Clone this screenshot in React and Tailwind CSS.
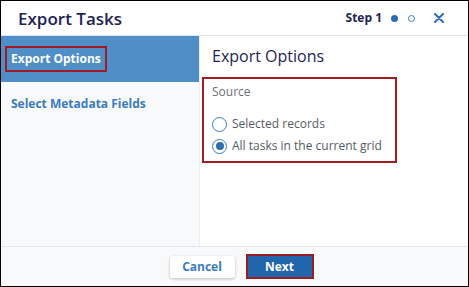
import React, { useState } from "react";

const font = { fontFamily: '"Open Sans", "Noto Sans", sans-serif' };

const Radio = ({ checked, label, onClick }) => (
  <label onClick={onClick} className="flex items-center gap-[5px] cursor-pointer h-[22px]">
    <span className="w-[15px] h-[15px] rounded-full border border-[#3d7cc0] bg-white flex items-center justify-center">
      {checked && <span className="w-[8px] h-[8px] rounded-full bg-[#2d6db3]" />}
    </span>
    <span className="text-[12px] text-[#555b66]">{label}</span>
  </label>
);

const App = () => {
  const [source, setSource] = useState("all");

  return (
    <div style={font} className="w-[469px] h-[287px] border border-black flex flex-col bg-white">
      {/* header */}
      <div className="h-[35px] border-b border-[#dde3ea] flex items-center pl-[17px] pr-[24px] shrink-0">
        <h1 className="text-[17px] font-semibold text-[#231f52] leading-none">Export Tasks</h1>
        <div className="ml-auto flex items-center">
          <span className="text-[12px] font-bold text-[#231f52] mr-[9px]">Step 1</span>
          <span className="w-[7px] h-[7px] rounded-full bg-[#2d6db3] mr-[10px]" />
          <span className="w-[7px] h-[7px] rounded-full border border-[#3d7cc0] mr-[19px]" />
          <svg width="10" height="10" viewBox="0 0 10 10" className="text-[#2d6db3]">
            <path d="M1 1L9 9M9 1L1 9" stroke="currentColor" strokeWidth="2" strokeLinecap="round" />
          </svg>
        </div>
      </div>

      {/* body */}
      <div className="flex flex-1 min-h-0">
        <div className="w-[199px] bg-[#f8f9fa] border-r border-[#eceef1] shrink-0">
          <div className="h-[46px] bg-[#4f8ec7] flex items-center pl-[4px]">
            <span className="border-2 border-[#9e1b22] px-[4px] py-[2px] text-[12px] font-bold text-white">
              Export Options
            </span>
          </div>
          <div className="pl-[10px] pt-[13px] text-[12px] font-bold text-[#3b7bbf]">Select Metadata Fields</div>
        </div>

        <div className="flex-1 pl-[2px] pt-[9px]">
          <h2 className="pl-[10px] text-[16px] font-medium text-[#231f52] leading-[22px]">Export Options</h2>
          <div className="mt-[10px] w-[195px] h-[86px] border-2 border-[#a11d22] pl-[8px] pt-[4px]">
            <div className="text-[12px] text-[#6b7079] leading-[18px]">Source</div>
            <div className="mt-[12px] flex flex-col">
              <Radio checked={source === "selected"} label="Selected records" onClick={() => setSource("selected")} />
              <Radio checked={source === "all"} label="All tasks in the current grid" onClick={() => setSource("all")} />
            </div>
          </div>
        </div>
      </div>

      {/* footer */}
      <div className="h-[40px] border-t border-[#e3e6ea] bg-[#f8f9fa] flex items-center justify-center gap-[11px] pl-[14px] shrink-0">
        <button className="w-[65px] h-[22px] bg-white rounded-[3px] shadow-[0_1px_3px_rgba(0,0,0,0.25)] text-[12px] font-bold text-[#3b7bbf]">
          Cancel
        </button>
        <div className="border-2 border-[#9e1b22]">
          <button className="w-[64px] h-[21px] bg-[#2166ad] text-[12px] font-bold text-white block">Next</button>
        </div>
      </div>
    </div>
  );
};

export default App;
